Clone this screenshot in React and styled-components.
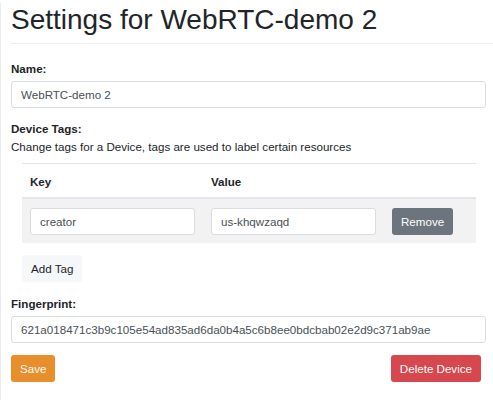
import React from "react";
import styled, { createGlobalStyle } from "styled-components";

const GlobalStyle = createGlobalStyle`
  html, body {
    margin: 0;
    padding: 0;
    background: #ffffff;
  }
  body {
    font-family: "Liberation Sans", Arial, Helvetica, sans-serif;
    font-size: 11.6px;
    line-height: 1.5;
    color: #212529;
  }
  * { box-sizing: border-box; }
`;

const Page = styled.div`
  min-height: 400px;
  border-left: 1px solid #ebebeb;
  padding-left: 10px;
`;

const Title = styled.h1`
  margin: 3px 0 0;
  font-size: 28px;
  font-weight: 500;
  line-height: 34px;
  color: #212529;
`;

const Rule = styled.hr`
  margin: 6px 0 0;
  border: 0;
  border-top: 1px solid #eeeeee;
`;

const Form = styled.form`
  display: flex;
  flex-direction: column;
  padding: 16px 7px 0 0;
`;

const Field = styled.div`
  display: flex;
  flex-direction: column;
  margin-bottom: ${(p) => p.$gap ?? 12}px;
`;

const Label = styled.label`
  font-weight: 700;
  line-height: 17.5px;
  margin-bottom: ${(p) => (p.$tight ? 0 : 3.5)}px;
`;

const Hint = styled.p`
  margin: 0;
  line-height: 17.5px;
`;

const TextInput = styled.input`
  display: block;
  width: 100%;
  height: 27px;
  padding: 0 9px;
  border: 1px solid #d9dde2;
  border-radius: 3px;
  font-family: inherit;
  font-size: 11.6px;
  color: #495057;
  background: #ffffff;
  outline: none;
`;

const TagsBlock = styled.div`
  margin: 8px 10px 0 11px;
  display: flex;
  flex-direction: column;
  align-items: flex-start;
`;

const TagTable = styled.table`
  width: 100%;
  border-collapse: collapse;
  table-layout: fixed;
`;

const HeadCell = styled.th`
  text-align: left;
  font-weight: 700;
  padding: 9px 8px 6px;
  line-height: 17.5px;
  border-top: 1px solid #e3e6e9;
  border-bottom: 2px solid #e3e6ea;
`;

const StripedRow = styled.tr`
  background: #f2f2f2;
`;

const Cell = styled.td`
  padding: 9px 8px 8px;
  vertical-align: top;
`;

const Button = styled.button`
  height: 27px;
  padding: 0 9px;
  border: 0;
  border-radius: 3px;
  font-family: inherit;
  font-size: 11.6px;
  line-height: 27px;
  cursor: pointer;
  color: ${(p) => (p.$tone === "light" ? "#212529" : "#ffffff")};
  background: ${(p) =>
    ({
      light: "#f6f7f8",
      secondary: "#6c757d",
      warning: "#e88e2b",
      danger: "#d6474e",
    })[p.$tone]};
`;

const AddButton = styled(Button)`
  margin-top: 12px;
`;

const Actions = styled.div`
  display: flex;
  justify-content: space-between;
  padding-right: 5px;
`;

export default function App() {
  return (
    <Page>
      <GlobalStyle />
      <Title>Settings for WebRTC-demo 2</Title>
      <Rule />
      <Form onSubmit={(e) => e.preventDefault()}>
        <Field>
          <Label>Name:</Label>
          <TextInput defaultValue="WebRTC-demo 2" />
        </Field>

        <Field $gap={13}>
          <Label $tight>Device Tags:</Label>
          <Hint>Change tags for a Device, tags are used to label certain resources</Hint>
          <TagsBlock>
            <TagTable>
              <colgroup>
                <col style={{ width: "181px" }} />
                <col style={{ width: "181px" }} />
                <col />
              </colgroup>
              <thead>
                <tr>
                  <HeadCell>Key</HeadCell>
                  <HeadCell>Value</HeadCell>
                  <HeadCell />
                </tr>
              </thead>
              <tbody>
                <StripedRow>
                  <Cell>
                    <TextInput defaultValue="creator" />
                  </Cell>
                  <Cell>
                    <TextInput defaultValue="us-khqwzaqd" />
                  </Cell>
                  <Cell>
                    <Button type="button" $tone="secondary">Remove</Button>
                  </Cell>
                </StripedRow>
              </tbody>
            </TagTable>
            <AddButton type="button" $tone="light">Add Tag</AddButton>
          </TagsBlock>
        </Field>

        <Field>
          <Label>Fingerprint:</Label>
          <TextInput defaultValue="621a018471c3b9c105e54ad835ad6da0b4a5c6b8ee0bdcbab02e2d9c371ab9ae" />
        </Field>

        <Actions>
          <Button type="submit" $tone="warning">Save</Button>
          <Button type="button" $tone="danger">Delete Device</Button>
        </Actions>
      </Form>
    </Page>
  );
}
